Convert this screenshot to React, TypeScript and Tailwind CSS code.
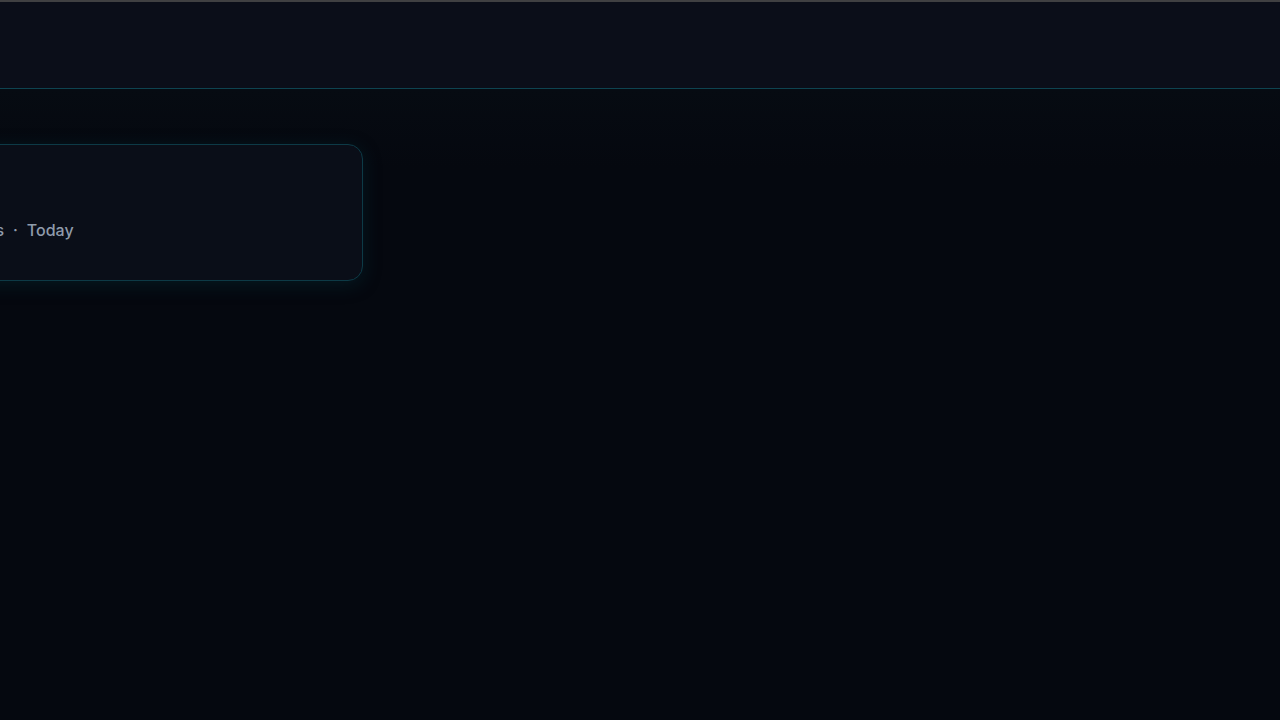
import React from "react";

export default function App() {
  return (
    <div className="w-[1280px] h-[720px] overflow-hidden bg-[#05080f] flex flex-col" style={{ fontFamily: "Inter, 'Noto Sans', sans-serif" }}>
      <div className="h-[2px] bg-[#404042] shrink-0" />
      <header className="h-[86px] shrink-0 bg-[#0b0e19]" />
      <div className="h-[1px] shrink-0 bg-[#0e4350]" />
      <main className="flex-1 bg-gradient-to-b from-[#060b12] to-[#05080f] to-[80px] pt-[55px]">
        <div className="ml-[-150px] w-[513px] h-[137px] rounded-[15px] border border-[#0d3a46] bg-[#0a0e18] shadow-[0_4px_18px_rgba(6,50,60,0.4)] flex flex-col pl-[29px] pt-[73px]">
          <div className="flex items-center gap-[9px] text-[16px] leading-[24px] font-medium text-[#8f9bab]">
            <span className="w-[124px] text-right">12 items</span>
            <span>·</span>
            <span>Today</span>
          </div>
        </div>
      </main>
    </div>
  );
}
